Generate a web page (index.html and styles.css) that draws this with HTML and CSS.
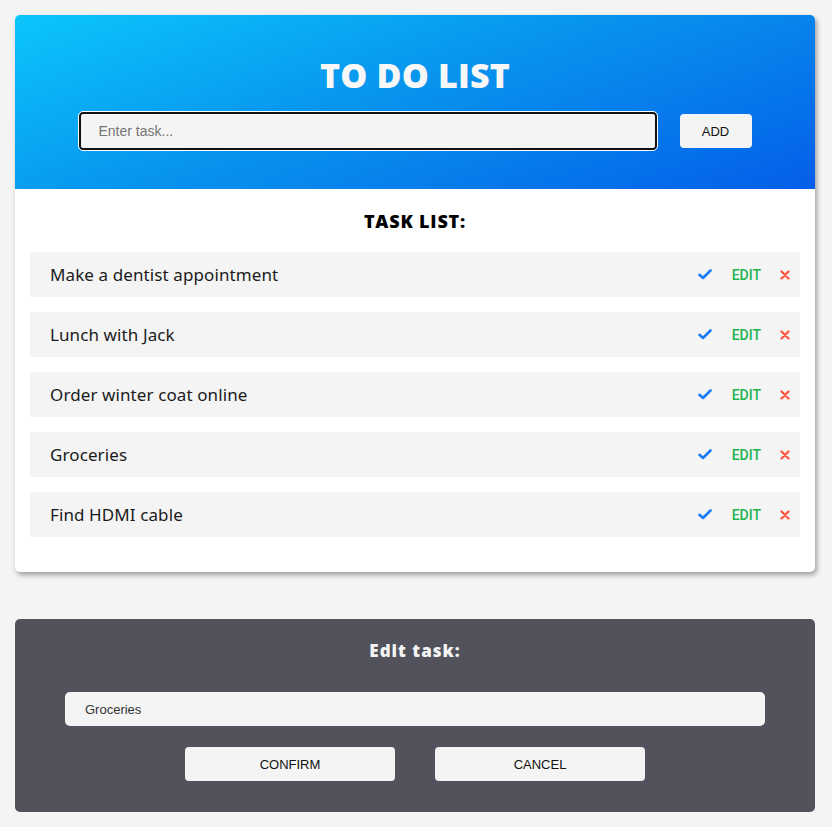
FILE: index.html
```html
<!DOCTYPE html>
<html>
<head>
<meta charset="utf-8">
<link rel="stylesheet" href="styles.css">
</head>
<body>
<div class="page">
  <section class="card">
    <header class="hero">
      <h1 class="title">TO DO LIST</h1>
      <form class="add-form">
        <input class="task-input" type="text" placeholder="Enter task...">
        <button class="add-btn" type="button">ADD</button>
      </form>
    </header>
    <div class="list-wrap">
      <h2 class="list-title">TASK LIST:</h2>
      <ul class="tasks">
        <li class="task"><span class="task-text">Make a dentist appointment</span><span class="actions"><svg class="check" viewBox="0 0 14 11" width="14" height="11"><path d="M1.5 5.8 L5 9 L12.5 1.5" fill="none" stroke="#1a7cf5" stroke-width="2.6" stroke-linecap="round" stroke-linejoin="round"/></svg><span class="edit">EDIT</span><svg class="del" viewBox="0 0 10 10" width="10" height="10"><path d="M1.5 1.5 L8.5 8.5 M8.5 1.5 L1.5 8.5" stroke="#fc5a45" stroke-width="2.4" stroke-linecap="round"/></svg></span></li>
        <li class="task"><span class="task-text">Lunch with Jack</span><span class="actions"><svg class="check" viewBox="0 0 14 11" width="14" height="11"><path d="M1.5 5.8 L5 9 L12.5 1.5" fill="none" stroke="#1a7cf5" stroke-width="2.6" stroke-linecap="round" stroke-linejoin="round"/></svg><span class="edit">EDIT</span><svg class="del" viewBox="0 0 10 10" width="10" height="10"><path d="M1.5 1.5 L8.5 8.5 M8.5 1.5 L1.5 8.5" stroke="#fc5a45" stroke-width="2.4" stroke-linecap="round"/></svg></span></li>
        <li class="task"><span class="task-text">Order winter coat online</span><span class="actions"><svg class="check" viewBox="0 0 14 11" width="14" height="11"><path d="M1.5 5.8 L5 9 L12.5 1.5" fill="none" stroke="#1a7cf5" stroke-width="2.6" stroke-linecap="round" stroke-linejoin="round"/></svg><span class="edit">EDIT</span><svg class="del" viewBox="0 0 10 10" width="10" height="10"><path d="M1.5 1.5 L8.5 8.5 M8.5 1.5 L1.5 8.5" stroke="#fc5a45" stroke-width="2.4" stroke-linecap="round"/></svg></span></li>
        <li class="task"><span class="task-text">Groceries</span><span class="actions"><svg class="check" viewBox="0 0 14 11" width="14" height="11"><path d="M1.5 5.8 L5 9 L12.5 1.5" fill="none" stroke="#1a7cf5" stroke-width="2.6" stroke-linecap="round" stroke-linejoin="round"/></svg><span class="edit">EDIT</span><svg class="del" viewBox="0 0 10 10" width="10" height="10"><path d="M1.5 1.5 L8.5 8.5 M8.5 1.5 L1.5 8.5" stroke="#fc5a45" stroke-width="2.4" stroke-linecap="round"/></svg></span></li>
        <li class="task"><span class="task-text">Find HDMI cable</span><span class="actions"><svg class="check" viewBox="0 0 14 11" width="14" height="11"><path d="M1.5 5.8 L5 9 L12.5 1.5" fill="none" stroke="#1a7cf5" stroke-width="2.6" stroke-linecap="round" stroke-linejoin="round"/></svg><span class="edit">EDIT</span><svg class="del" viewBox="0 0 10 10" width="10" height="10"><path d="M1.5 1.5 L8.5 8.5 M8.5 1.5 L1.5 8.5" stroke="#fc5a45" stroke-width="2.4" stroke-linecap="round"/></svg></span></li>
      </ul>
    </div>
  </section>
  <section class="edit-panel">
    <h3 class="edit-title">Edit task:</h3>
    <input class="edit-input" type="text" value="Groceries">
    <div class="edit-buttons">
      <button class="panel-btn" type="button">CONFIRM</button>
      <button class="panel-btn" type="button">CANCEL</button>
    </div>
  </section>
</div>
</body>
</html>
```

FILE: styles.css
```css
* { box-sizing: border-box; }
html, body { margin: 0; padding: 0; }
body {
  background: #f4f4f4;
  font-family: "Noto Sans", "DejaVu Sans", sans-serif;
  color: #1b1b1b;
}
.page {
  width: 800px;
  margin: 15px auto 0 15px;
  display: flex;
  flex-direction: column;
  gap: 47px;
}
.card {
  background: #fff;
  border-radius: 5px;
  overflow: hidden;
  box-shadow: 2px 3px 5px rgba(0,0,0,0.35);
}
.hero {
  height: 174px;
  background: linear-gradient(160deg, #0bc6fb 0%, #0895ee 45%, #045ee8 100%);
  display: flex;
  flex-direction: column;
  align-items: center;
  padding-top: 41px;
}
.title {
  margin: 0;
  color: #f7f7f7;
  font-family: "Open Sans", sans-serif;
  font-weight: 800;
  font-size: 34px;
  line-height: 38px;
  letter-spacing: 0.2px;
}
.add-form {
  margin-top: 18px;
  display: flex;
  align-items: center;
  gap: 23px;
}
.task-input {
  width: 578px;
  height: 38px;
  border: 2px solid #111;
  outline: 1px solid #fff;
  border-radius: 4px;
  background: #f4f4f4;
  padding: 0 18px;
  font-family: "Liberation Sans", Arial, sans-serif;
  font-size: 14px;
  color: #333;
}
.task-input::placeholder { color: #757575; }
.add-btn {
  width: 72px;
  height: 34px;
  border: none;
  border-radius: 4px;
  background: #f4f4f4;
  font-family: "Liberation Sans", Arial, sans-serif;
  font-size: 13px;
  color: #111;
}
.list-wrap {
  padding: 20px 15px 35px;
}
.list-title {
  margin: 0 0 19px;
  text-align: center;
  font-family: "Open Sans", sans-serif;
  font-weight: 800;
  font-size: 18px;
  line-height: 24px;
  letter-spacing: 0.8px;
  color: #000;
}
.tasks {
  list-style: none;
  margin: 0;
  padding: 0;
  display: flex;
  flex-direction: column;
  gap: 15px;
}
.task {
  height: 45px;
  background: #f4f4f4;
  display: flex;
  align-items: center;
  justify-content: space-between;
  padding: 0 10px 0 20px;
}
.task-text {
  font-family: "Noto Sans", sans-serif;
  font-size: 17px;
  letter-spacing: 0.1px;
  color: #1b1b1b;
}
.actions {
  display: flex;
  align-items: center;
}
.check { display: block; margin-right: 20px; }
.edit {
  font-family: Roboto, "Liberation Sans", sans-serif;
  font-weight: 500;
  font-size: 14px;
  color: #1db44f;
  margin-right: 19px;
}
.del { display: block; }
.edit-panel {
  height: 193px;
  background: #51525c;
  border-radius: 5px;
  display: flex;
  flex-direction: column;
  align-items: center;
  padding-top: 21px;
}
.edit-title {
  margin: 0;
  color: #f4f4f4;
  font-family: "Open Sans", sans-serif;
  font-weight: 800;
  font-size: 17px;
  line-height: 22px;
  letter-spacing: 1px;
}
.edit-input {
  margin-top: 30px;
  width: 700px;
  height: 34px;
  border: none;
  border-radius: 5px;
  background: #f4f4f4;
  padding: 0 20px;
  font-family: "Liberation Sans", Arial, sans-serif;
  font-size: 13px;
  color: #333;
}
.edit-buttons {
  margin-top: 21px;
  display: flex;
  gap: 40px;
}
.panel-btn {
  width: 210px;
  height: 34px;
  border: none;
  border-radius: 4px;
  background: #f4f4f4;
  font-family: "Liberation Sans", Arial, sans-serif;
  font-size: 13px;
  color: #111;
}
```
